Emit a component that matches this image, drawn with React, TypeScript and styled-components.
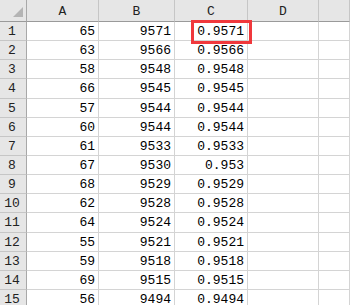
import React from "react";
import styled, { createGlobalStyle } from "styled-components";

const rows: [number, number, string][] = [
  [65, 9571, "0.9571"],
  [63, 9566, "0.9566"],
  [58, 9548, "0.9548"],
  [66, 9545, "0.9545"],
  [57, 9544, "0.9544"],
  [60, 9544, "0.9544"],
  [61, 9533, "0.9533"],
  [67, 9530, "0.953"],
  [68, 9529, "0.9529"],
  [62, 9528, "0.9528"],
  [64, 9524, "0.9524"],
  [55, 9521, "0.9521"],
  [59, 9518, "0.9518"],
  [69, 9515, "0.9515"],
  [56, 9494, "0.9494"],
];

const columns = ["A", "B", "C", "D", ""];

function App() {
  return (
    <>
      <GlobalStyle />
      <Sheet>
        <Grid>
          <Corner>
            <CornerMark />
          </Corner>
          {columns.map((c, i) => (
            <ColHeader key={i}>{c}</ColHeader>
          ))}
          {rows.map((r, i) => (
            <React.Fragment key={i}>
              <RowHeader>{i + 1}</RowHeader>
              <Cell>{r[0]}</Cell>
              <Cell>{r[1]}</Cell>
              <Cell>{r[2]}</Cell>
              <Cell />
              <Cell />
            </React.Fragment>
          ))}
        </Grid>
        <Highlight />
      </Sheet>
    </>
  );
}

const GlobalStyle = createGlobalStyle`
  html, body {
    margin: 0;
    padding: 0;
    background: #ffffff;
    overflow: hidden;
  }
`;

const Sheet = styled.div`
  position: relative;
  width: 350px;
  height: 305px;
  overflow: hidden;
  font-family: "Liberation Mono", "Noto Sans CJK SC", monospace;
  font-size: 13px;
  color: #000;
`;

const Grid = styled.div`
  display: grid;
  grid-template-columns: 27px 72px 76px 73px 71px 1fr;
  grid-template-rows: 22px repeat(15, 19.15px);
`;

const Corner = styled.div`
  position: relative;
  box-sizing: border-box;
  background: #e6e6e6;
  border-right: 1px solid #a8a8a8;
  border-bottom: 1px solid #9a9a9a;
`;

const CornerMark = styled.div`
  position: absolute;
  right: 3px;
  bottom: 4px;
  width: 0;
  height: 0;
  border-left: 10px solid transparent;
  border-bottom: 10px solid #b4b4b4;
`;

const ColHeader = styled.div`
  box-sizing: border-box;
  background: #e6e6e6;
  border-right: 1px solid #c6c6c6;
  border-bottom: 1px solid #9a9a9a;
  display: flex;
  align-items: center;
  justify-content: center;
  padding-top: 1px;
  color: #222;
`;

const RowHeader = styled.div`
  box-sizing: border-box;
  background: #e6e6e6;
  border-right: 1px solid #a8a8a8;
  border-bottom: 1px solid #c6c6c6;
  display: flex;
  align-items: center;
  justify-content: center;
  padding-right: 2px;
  padding-top: 1px;
  color: #222;
`;

const Cell = styled.div`
  box-sizing: border-box;
  border-right: 1px solid #d4d4d4;
  border-bottom: 1px solid #d4d4d4;
  display: flex;
  align-items: center;
  justify-content: flex-end;
  padding-right: 3px;
  padding-top: 1px;
`;

const Highlight = styled.div`
  position: absolute;
  left: 191px;
  top: 20px;
  width: 61px;
  height: 24px;
  box-sizing: border-box;
  border: 3px solid #f0383c;
  pointer-events: none;
`;

export default App;
